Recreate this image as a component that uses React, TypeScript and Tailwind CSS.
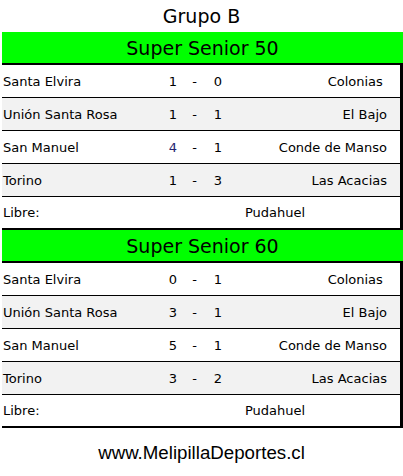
import React from 'react';

type Match = { home: string; hs: number; as: number; away: string; blue?: boolean };

const groups: { title: string; matches: Match[]; libre: string }[] = [
  {
    title: 'Super Senior 50',
    matches: [
      { home: 'Santa Elvira', hs: 1, as: 0, away: 'Colonias\u00a0' },
      { home: 'Unión Santa Rosa', hs: 1, as: 1, away: 'El Bajo' },
      { home: 'San Manuel', hs: 4, as: 1, away: 'Conde de Manso', blue: true },
      { home: 'Torino', hs: 1, as: 3, away: 'Las Acacias' },
    ],
    libre: 'Pudahuel',
  },
  {
    title: 'Super Senior 60',
    matches: [
      { home: 'Santa Elvira', hs: 0, as: 1, away: 'Colonias\u00a0' },
      { home: 'Unión Santa Rosa', hs: 3, as: 1, away: 'El Bajo' },
      { home: 'San Manuel', hs: 5, as: 1, away: 'Conde de Manso' },
      { home: 'Torino', hs: 3, as: 2, away: 'Las Acacias' },
    ],
    libre: 'Pudahuel',
  },
];

const MatchRow: React.FC<{ m: Match; shaded: boolean }> = ({ m, shaded }) => (
  <div
    className={`grid h-[33px] grid-cols-[160px_22px_21px_26px_1fr] items-center border-b border-black pt-px ${
      shaded ? 'bg-[#f2f2f2]' : 'bg-white'
    }`}
  >
    <span className="pl-px">{m.home}</span>
    <span className={`text-center ${m.blue ? 'text-[#24246e]' : ''}`}>{m.hs}</span>
    <span className="text-center">-</span>
    <span className="text-center">{m.as}</span>
    <span className="pr-[13px] text-right">{m.away}</span>
  </div>
);

const Group: React.FC<{ title: string; matches: Match[]; libre: string }> = ({ title, matches, libre }) => (
  <div className="ml-[2px] w-[401px]">
    <div className="flex h-[31px] items-center justify-center bg-[#00ff00] pt-[2px] text-[19px]">{title}</div>
    <div className="border-t-2 border-b-2 border-r-[3px] border-black">
      {matches.map((m, i) => (
        <MatchRow key={i} m={m} shaded={i % 2 === 1} />
      ))}
      <div className="flex h-[31px] items-center bg-white">
        <span className="w-[243px] pl-px">Libre:</span>
        <span>{libre}</span>
      </div>
    </div>
  </div>
);

export default function App() {
  return (
    <div className="h-[476px] w-[403px] bg-white text-[13px] text-black" style={{ fontFamily: '"DejaVu Sans", Verdana, sans-serif' }}>
      <div className="flex h-[32px] items-center justify-center text-[19px]">Grupo B</div>
      {groups.map((g) => (
        <Group key={g.title} {...g} />
      ))}
      <div
        className="flex h-[48px] items-center justify-center pt-[2px] text-[18.7px]"
        style={{ fontFamily: '"Liberation Sans", Arial, sans-serif' }}
      >
        www.MelipillaDeportes.cl
      </div>
    </div>
  );
}
